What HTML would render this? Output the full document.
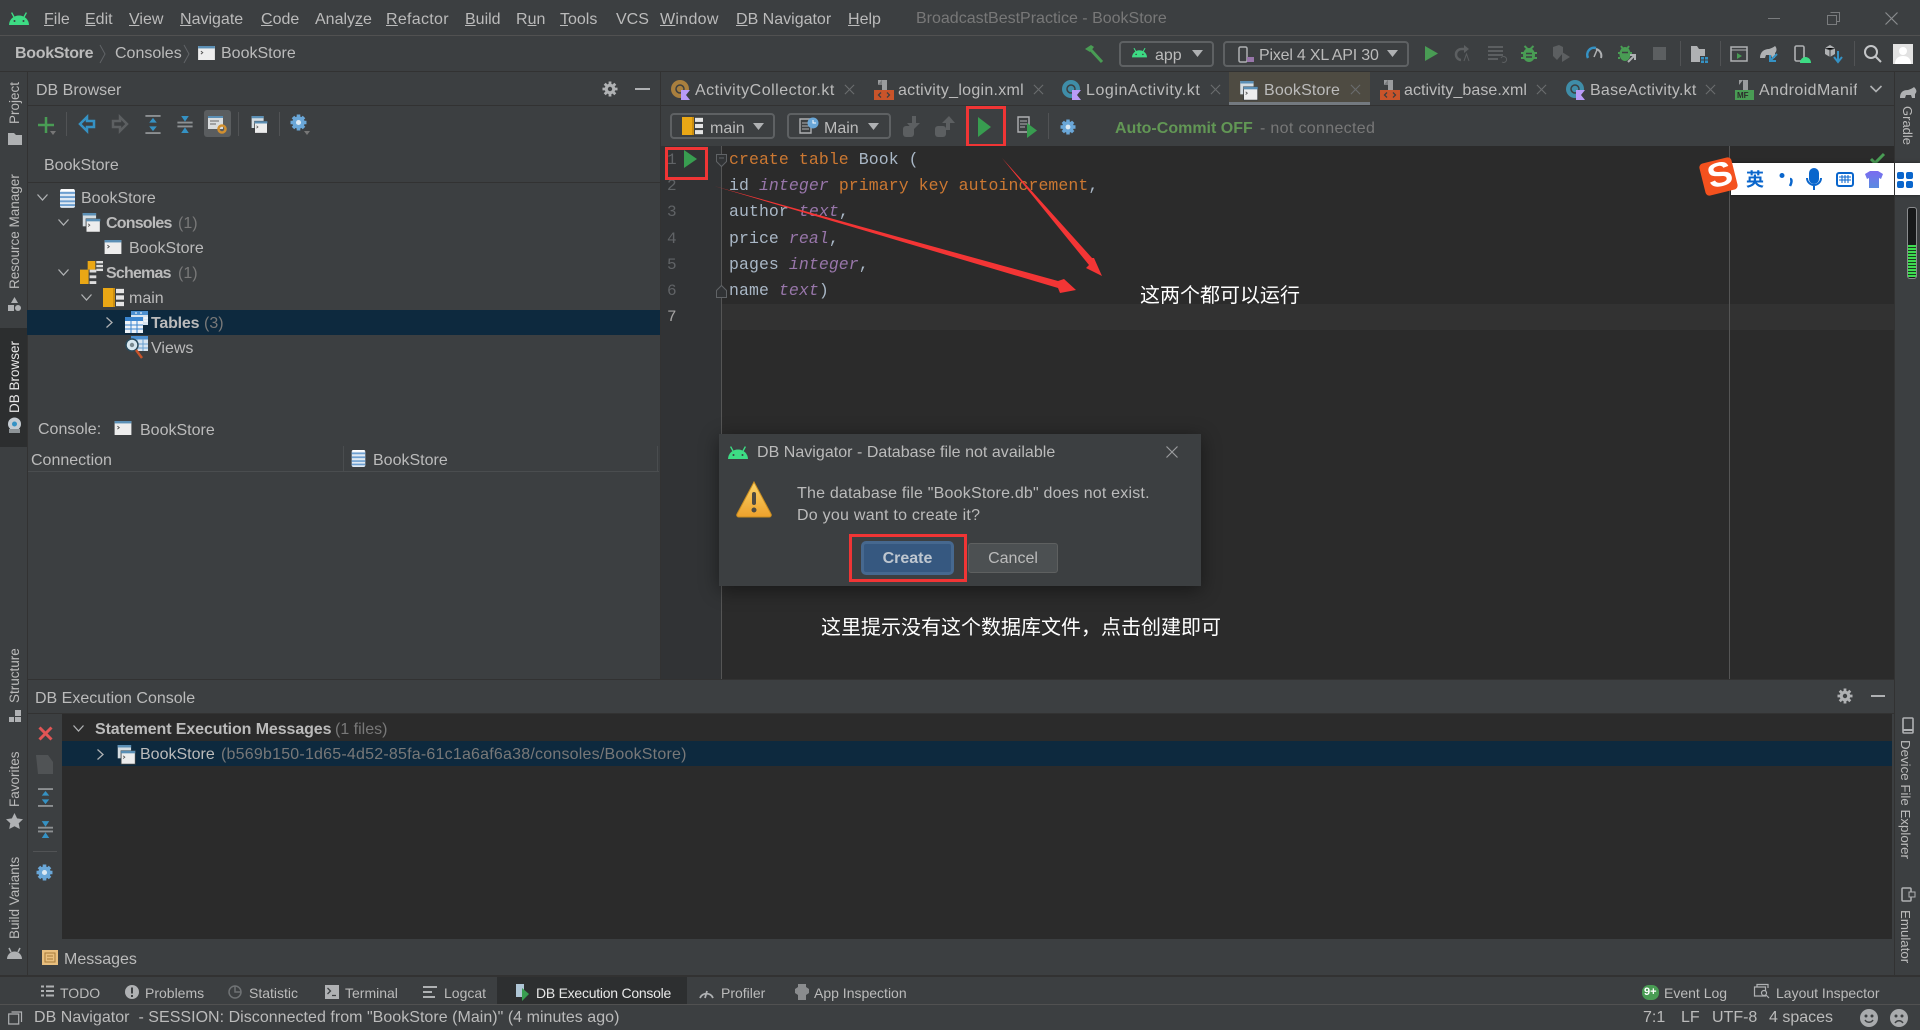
<!DOCTYPE html>
<html><head><meta charset="utf-8"><title>BookStore</title>
<style>
html,body{margin:0;padding:0;width:1920px;height:1030px;overflow:hidden;background:#3c3f41}
body{position:relative;font-family:"Liberation Sans","Noto Sans CJK SC",sans-serif;font-size:16px;color:#bbb}
.t{position:absolute;line-height:20px;white-space:pre;color:#bbb;margin-top:1px}
.b{font-weight:bold}.d{color:#787878}
.s{font-size:14px;margin-top:0}
.r{position:absolute}
.c{position:absolute;font-family:"Liberation Mono",monospace;font-size:16.5px;letter-spacing:.08px;line-height:26px;white-space:pre;color:#a9b7c6;left:729px}
.k{color:#cc7832}.p{color:#9876aa;font-style:italic}
.n{position:absolute;font-family:"Liberation Mono",monospace;font-size:16px;line-height:26px;color:#606366;left:667px}
.vl,.vr{position:absolute;width:22px;line-height:22px;writing-mode:vertical-rl;text-align:center;font-size:13.5px;color:#bbb;white-space:nowrap}
.vl{transform:rotate(180deg);left:4px}
.vr{left:1894px;font-size:13.300px}
svg{position:absolute;overflow:visible}
.box{position:absolute;border:2px solid #5e6163;border-radius:4px;box-sizing:border-box}
</style></head><body>
<svg width="0" height="0" style="position:absolute">
<defs>
<linearGradient id="wg" x1="0" y1="0" x2="0" y2="1"><stop offset="0" stop-color="#fbd468"/><stop offset="1" stop-color="#eda12c"/></linearGradient>
<linearGradient id="sg" x1="0" y1="0" x2="0" y2="1"><stop offset="0" stop-color="#7a6cf0"/><stop offset="1" stop-color="#5a8be0"/></linearGradient>
<symbol id="and" viewBox="0 0 20 13"><path d="M0 13a10 9.500 0 0 1 20 0z" fill="#3ddc84"/><path d="M5 5L2.600 .6M15 5l2.400-4.400" stroke="#3ddc84" stroke-width="1.400"/><circle cx="5.500" cy="9" r="1" fill="#3c3f41"/><circle cx="14.500" cy="9" r="1" fill="#3c3f41"/></symbol>
<symbol id="con" viewBox="0 0 18 15"><rect width="18" height="15" fill="#ededed"/><rect width="18" height="2.600" fill="#5b8fb5"/><path d="M3 5.500l2 1.600-2 1.600" stroke="#555" fill="none"/></symbol>
<symbol id="cons" viewBox="0 0 21 24"><rect x="0" y="0" width="16" height="16" fill="#d5dde2"/><rect width="16" height="3" fill="#5b8fb5"/><rect x="4" y="7" width="17" height="16" fill="#ededed" stroke="#3c3f41"/><rect x="4" y="7" width="17" height="3" fill="#5b8fb5"/><path d="M6.500 13l2 1.600-2 1.600" stroke="#555" fill="none"/></symbol>
<symbol id="db" viewBox="0 0 16 20"><rect width="16" height="20" rx="2" fill="#dfe9f3"/><path d="M0 4h16M0 8.500h16M0 13h16M0 17h16" stroke="#6d9fd0" stroke-width="2"/><path d="M1 1h14" stroke="#fff" stroke-width="2"/></symbol>
<symbol id="sch" viewBox="0 0 21 22" preserveAspectRatio="none"><rect x="0" y="0" width="10" height="22" fill="#eaa715"/><path d="M10 0h2v22h-2z" fill="#c98d10"/><rect x="13" y="1" width="8" height="5" fill="#e4e4e4"/><rect x="13" y="8.500" width="8" height="5" fill="#e4e4e4"/><rect x="13" y="16" width="8" height="5" fill="#e4e4e4"/></symbol>
<symbol id="schs" viewBox="0 0 24 24"><rect x="8" y="0" width="8" height="9" fill="#eaa715"/><rect x="17" y="0" width="7" height="2.500" fill="#ddd"/><rect x="17" y="4" width="7" height="2.500" fill="#ddd"/><rect x="17" y="8" width="7" height="2.500" fill="#ddd"/><rect x="0" y="9" width="9" height="15" fill="#eaa715"/><rect x="10" y="9" width="7" height="3" fill="#ddd"/><rect x="10" y="15" width="7" height="3" fill="#ddd"/><rect x="10" y="21" width="7" height="3" fill="#ddd"/></symbol>
<symbol id="tab" viewBox="0 0 23 22"><rect x="6" y="0" width="17" height="14" fill="#d7e4f0"/><rect x="6" y="0" width="17" height="4" fill="#4c90d0"/><rect y="6" width="18" height="16" fill="#eef3f8"/><rect y="6" width="18" height="4" fill="#3a85cf"/><path d="M0 14h18M0 18h18M6 10v12M12 10v12" stroke="#3a85cf"/><path d="M10 2h2M15 2h2M19 7h4M19 10h4" stroke="#fff"/></symbol>
<symbol id="gear" viewBox="0 0 16 16"><path d="M8 .5v15M.5 8h15M2.700 2.700l10.600 10.600M13.300 2.700L2.700 13.300" stroke="currentColor" stroke-width="2.800"/><circle cx="8" cy="8" r="5.300" fill="currentColor"/><circle cx="8" cy="8" r="2.200" fill="#3c3f41"/></symbol>
<symbol id="gearb" viewBox="0 0 16 16"><path d="M8 .5v15M.5 8h15M2.800 2.800l10.400 10.400M13.200 2.800L2.800 13.200" stroke="#6aa7d8" stroke-width="3.400"/><circle cx="8" cy="8" r="5.800" fill="#6aa7d8"/><circle cx="8" cy="8" r="2.400" fill="#dce9f3"/></symbol>
<symbol id="xp" viewBox="0 0 16 20"><path d="M0 1h16M0 19h16" stroke="#8d9092" stroke-width="2"/><path d="M8 3l4 5H4zM8 17l4-5H4z" fill="#3592c4"/></symbol>
<symbol id="cl" viewBox="0 0 16 20"><path d="M0 8h16M0 12h16" stroke="#8d9092" stroke-width="2"/><path d="M8 7l4-6H4zM8 13l4 6H4z" fill="#3592c4"/></symbol>
<symbol id="xml" viewBox="0 0 20 20"><path d="M4 0h9v10H4z" fill="#9a9c9e"/><path d="M8 0L4 5v5h4z" fill="#3c3f41"/><path d="M4 5l4-5v5z" fill="#7a7c7e"/><rect y="10" width="20" height="10" fill="#c9542a"/><path d="M7 12.500L4.500 15 7 17.500M13 12.500l2.500 2.500-2.500 2.500" stroke="#3c3f41" stroke-width="1.300" fill="none"/></symbol>
<symbol id="close" viewBox="0 0 12 12"><path d="M1 1l10 10M11 1L1 11" stroke="#6a6c6e" stroke-width="1.200"/></symbol>
</defs></svg>

<!-- Title bar -->
<div class="r" style="left:0;top:35px;width:1920px;height:1px;background:#515151"></div>
<svg style="left:9px;top:12px" width="20" height="13"><use href="#and"/></svg>
<span class="t" style="left:44px;top:9px"><u>F</u>ile</span>
<span class="t" style="left:85px;top:9px"><u>E</u>dit</span>
<span class="t" style="left:129px;top:9px"><u>V</u>iew</span>
<span class="t" style="left:180px;top:9px"><u>N</u>avigate</span>
<span class="t" style="left:261px;top:9px"><u>C</u>ode</span>
<span class="t" style="left:315px;top:9px">Analy<u>z</u>e</span>
<span class="t" style="left:386px;top:9px;letter-spacing:.3px"><u>R</u>efactor</span>
<span class="t" style="left:465px;top:9px"><u>B</u>uild</span>
<span class="t" style="left:516px;top:9px">R<u>u</u>n</span>
<span class="t" style="left:560px;top:9px"><u>T</u>ools</span>
<span class="t" style="left:616px;top:9px">VCS</span>
<span class="t" style="left:660px;top:9px;letter-spacing:.3px"><u>W</u>indow</span>
<span class="t" style="left:736px;top:9px"><u>D</u>B Navigator</span>
<span class="t" style="left:848px;top:9px"><u>H</u>elp</span>
<span class="t d" style="left:916px;top:8px">BroadcastBestPractice - BookStore</span>
<div class="r" style="left:1768px;top:18px;width:12px;height:1px;background:#7a7c7e"></div>
<svg style="left:1827px;top:12px" width="13" height="13" fill="none" stroke="#7a7c7e"><path d="M3.500.5h9v9h-3M.5 3.500h9v9h-9z"/></svg>
<svg style="left:1885px;top:12px" width="13" height="13"><path d="M.5.5l12 12M12.500.5l-12 12" stroke="#8a8c8e" stroke-width="1.200"/></svg>

<!-- Breadcrumb / run bar -->
<span class="t b" style="left:15px;top:43px;letter-spacing:-.3px">BookStore</span>
<svg style="left:100px;top:45px" width="6" height="18"><path d="M0 0l5 9-5 9" stroke="#606366" fill="none"/></svg>
<span class="t" style="left:115px;top:43px">Consoles</span>
<svg style="left:184px;top:45px" width="6" height="18"><path d="M0 0l5 9-5 9" stroke="#606366" fill="none"/></svg>
<svg style="left:198px;top:46px" width="17" height="14"><use href="#con"/></svg>
<span class="t" style="left:221px;top:43px">BookStore</span>
<div class="r" style="left:0;top:71px;width:1920px;height:1px;background:#323232"></div>

<svg style="left:1084px;top:44px" width="20" height="19"><path d="M1 5l6-4 3 2-4 5z" fill="#499c54"/><path d="M7 6l11 12" stroke="#499c54" stroke-width="3"/></svg>
<div class="box" style="left:1119px;top:41px;width:95px;height:26px"></div>
<svg style="left:1132px;top:47px" width="15" height="11"><use href="#and"/></svg>
<span class="t" style="left:1155px;top:45px">app</span>
<svg style="left:1192px;top:50px" width="11" height="7"><path d="M0 0h11L5.500 7z" fill="#afb1b3"/></svg>
<div class="box" style="left:1223px;top:41px;width:186px;height:26px"></div>
<svg style="left:1238px;top:46px" width="16" height="17"><rect x="1" y="1" width="8" height="15" rx="1.500" fill="none" stroke="#afb1b3" stroke-width="1.500"/><rect x="9" y="11" width="7" height="5" fill="#9876aa"/></svg>
<span class="t" style="left:1259px;top:45px;letter-spacing:-.2px">Pixel 4 XL API 30</span>
<svg style="left:1387px;top:50px" width="11" height="7"><path d="M0 0h11L5.500 7z" fill="#afb1b3"/></svg>

<svg style="left:1425px;top:46px" width="13" height="15"><path d="M0 0l13 7.500L0 15z" fill="#499c54"/></svg>
<svg style="left:1455px;top:45px" width="16" height="17"><path d="M11 4H7a5.500 5.500 0 0 0-1 11" stroke="#5c5f61" stroke-width="2.500" fill="none"/><path d="M9 0l5 4-5 4z" fill="#5c5f61"/><path d="M9 16l2.500-7 2.500 7" stroke="#5c5f61" fill="none"/></svg>
<svg style="left:1488px;top:46px" width="18" height="16"><path d="M0 1h15M0 5h15M0 9h15M0 13h10" stroke="#5c5f61" stroke-width="2"/><path d="M13 12a3 3 0 1 1 1 4" stroke="#5c5f61" fill="none"/></svg>
<svg style="left:1521px;top:45px" width="16" height="17"><ellipse cx="8" cy="10" rx="6" ry="7" fill="#499c54"/><path d="M3.500 1l3 3M12.500 1l-3 3M0 8h3M13 8h3M0 13h3M13 13h3" stroke="#499c54" stroke-width="2"/><path d="M5 8.500h6M5 12h6" stroke="#3c3f41" stroke-width="1.500"/></svg>
<svg style="left:1553px;top:45px" width="18" height="18"><path d="M0 2l6-2 4 2v6l-6 7-4-4z" fill="#5c5f61"/><path d="M9 7l8 5-8 5z" fill="#5c5f61"/></svg>
<svg style="left:1586px;top:45px" width="17" height="14"><path d="M2 13a7 7 0 0 1 8-10" stroke="#3592c4" stroke-width="2.500" fill="none"/><path d="M10 4a7 7 0 0 1 5 9" stroke="#afb1b3" stroke-width="2" fill="none"/><path d="M11 5L8 12" stroke="#afb1b3" stroke-width="1.500"/></svg>
<svg style="left:1618px;top:45px" width="18" height="18"><ellipse cx="7" cy="9" rx="5.500" ry="7" fill="#499c54"/><path d="M3 1l2 3M11 1L9 4M0 8h2M12 8h2M0 13h2" stroke="#499c54" stroke-width="2"/><path d="M4 7.500h6" stroke="#3c3f41" stroke-width="1.500"/><path d="M10 17l7-7M12 10h5v5" stroke="#afb1b3" stroke-width="2" fill="none"/></svg>
<div class="r" style="left:1653px;top:47px;width:13px;height:13px;background:#5c5f61"></div>
<div class="r" style="left:1680px;top:41px;width:1px;height:25px;background:#515355"></div>
<svg style="left:1691px;top:46px" width="18" height="17"><path d="M0 0h6l2 3h6v7H9v6H0z" fill="#afb1b3"/><path d="M10 11h3v2.500h-3zM14 11h3v2.500h-3zM10 14.500h3V17h-3zM14 14.500h3V17h-3z" fill="#3592c4"/></svg>
<div class="r" style="left:1720px;top:41px;width:1px;height:25px;background:#515355"></div>
<svg style="left:1730px;top:46px" width="18" height="16"><rect x="1" y="1" width="16" height="14" fill="none" stroke="#afb1b3" stroke-width="1.500"/><path d="M1 4h16" stroke="#afb1b3"/><path d="M7 7l5 3-5 3z" fill="#499c54"/></svg>
<svg style="left:1760px;top:45px" width="18" height="18"><path d="M0 13c0-6 4-9 9-9 3-1 5-2 6-3 2 2 2 5 0 7v5h-3l-1-3H6l-1 3H1z" fill="#afb1b3"/><path d="M17 9l-7 7M10 10v6h6" stroke="#3592c4" stroke-width="2" fill="none"/></svg>
<svg style="left:1794px;top:45px" width="17" height="18"><rect x="1" y="1" width="9" height="15" rx="1.500" fill="none" stroke="#afb1b3" stroke-width="1.600"/><path d="M6 18a5.500 6 0 0 1 11 0z" fill="#3ddc84"/></svg>
<svg style="left:1825px;top:45px" width="18" height="18"><path d="M0 3l5-3 5 3v6l-5 3-5-3z" fill="#afb1b3"/><path d="M5 5v7M0 3l5 2 5-2" stroke="#3c3f41"/><path d="M13 6v10M9 12l4 5 4-5" stroke="#3592c4" stroke-width="2" fill="none"/></svg>
<div class="r" style="left:1854px;top:41px;width:1px;height:25px;background:#515355"></div>
<svg style="left:1864px;top:45px" width="18" height="18" fill="none" stroke="#c4c6c8" stroke-width="2"><circle cx="7" cy="7" r="6"/><path d="M11.500 11.500L17 17"/></svg>
<svg style="left:1893px;top:44px" width="20" height="20"><rect width="20" height="20" fill="#e2e2e2"/><circle cx="10" cy="7" r="4" fill="#fff"/><path d="M2 20c0-6 4-8 8-8s8 2 8 8z" fill="#fff"/></svg>

<!-- Left stripe -->
<div class="r" style="left:27px;top:71px;width:1px;height:905px;background:#323232"></div>
<div class="r" style="left:0;top:328px;width:27px;height:119px;background:#2c2e2f"></div>
<div class="vl" style="top:82px;height:42px">Project</div>
<svg style="left:8px;top:133px" width="14" height="12"><path d="M0 0h6l2 2h6v10H0z" fill="#afb1b3"/></svg>
<div class="vl" style="top:175px;height:114px">Resource Manager</div>
<svg style="left:7px;top:297px" width="15" height="14"><path d="M7.500 0l3.500 6H4z" fill="#afb1b3"/><rect x="1" y="8" width="6" height="6" fill="#afb1b3"/><circle cx="11" cy="11" r="3" fill="#afb1b3"/></svg>
<div class="vl" style="top:340px;height:73px;color:#e8e8e8">DB Browser</div>
<svg style="left:6px;top:417px" width="17" height="17"><circle cx="8.500" cy="7" r="6.500" fill="#c5ccd2"/><circle cx="8.500" cy="7" r="2.500" fill="#3592c4"/><rect x="3" y="12" width="11" height="4" fill="#8d9396"/></svg>
<div class="vl" style="top:647px;height:58px">Structure</div>
<svg style="left:9px;top:710px" width="13" height="13"><rect x="6" y="0" width="6" height="6" fill="#afb1b3"/><rect x="0" y="7" width="5" height="5" fill="#afb1b3"/><rect x="6" y="7" width="6" height="5" fill="#afb1b3"/></svg>
<div class="vl" style="top:753px;height:54px">Favorites</div>
<svg style="left:6px;top:813px" width="17" height="16"><path d="M8.500 0l2.600 5.400 5.900.8-4.300 4.100 1.100 5.700-5.300-2.800L3.200 16l1.100-5.700L0 6.200l5.900-.8z" fill="#afb1b3"/></svg>
<div class="vl" style="top:857px;height:82px">Build Variants</div>
<svg style="left:7px;top:948px" width="15" height="11"><path d="M0 11a7.500 7.500 0 0 1 15 0z" fill="#afb1b3"/><path d="M4 4L2 0M11 4l2-4" stroke="#afb1b3" stroke-width="1.500"/></svg>

<!-- DB browser -->
<span class="t" style="left:36px;top:80px">DB Browser</span>
<svg style="left:602px;top:81px;color:#afb1b3" width="16" height="16"><use href="#gear"/></svg>
<div class="r" style="left:635px;top:88px;width:15px;height:2px;background:#afb1b3"></div>
<div class="r" style="left:28px;top:105px;width:632px;height:1px;background:#323232"></div>

<svg style="left:38px;top:117px" width="16" height="16"><path d="M8 0v16M0 8h16" stroke="#499c54" stroke-width="2.500"/></svg>
<svg style="left:50px;top:131px" width="6" height="4"><path d="M0 0h6L3 4z" fill="#777"/></svg>
<div class="r" style="left:66px;top:112px;width:1px;height:24px;background:#515355"></div>
<svg style="left:79px;top:116px" width="16" height="16"><path d="M8 1L1 8l7 7v-4h7V5H8z" fill="none" stroke="#3592c4" stroke-width="2.500"/></svg>
<svg style="left:112px;top:116px" width="16" height="16"><path d="M8 1l7 7-7 7v-4H1V5h7z" fill="none" stroke="#5c5f61" stroke-width="2.500"/></svg>
<svg style="left:145px;top:115px" width="16" height="19"><use href="#xp"/></svg>
<svg style="left:177px;top:115px" width="16" height="19"><use href="#cl"/></svg>
<div class="r" style="left:204px;top:110px;width:27px;height:27px;background:#5a5d5f;border-radius:3px"></div>
<svg style="left:208px;top:116px" width="19" height="18"><rect width="15" height="13" fill="#d9dcde"/><path d="M0 1h15" stroke="#5b8fb5" stroke-width="2"/><path d="M2 5h9M2 8h6" stroke="#666"/><circle cx="14" cy="13" r="3.500" fill="none" stroke="#d18f2f" stroke-width="2.500"/></svg>
<div class="r" style="left:238px;top:112px;width:1px;height:24px;background:#515355"></div>
<svg style="left:250px;top:116px" width="19" height="18"><use href="#cons"/></svg>
<div class="r" style="left:279px;top:112px;width:1px;height:24px;background:#515355"></div>
<svg style="left:290px;top:114px" width="17" height="17"><use href="#gearb"/></svg>
<svg style="left:304px;top:131px" width="6" height="4"><path d="M0 0h6L3 4z" fill="#777"/></svg>

<span class="t" style="left:44px;top:155px">BookStore</span>
<div class="r" style="left:28px;top:182px;width:632px;height:1px;background:#323232"></div>
<svg style="left:37px;top:194px" width="11" height="7"><path d="M.5.5L5.500 6l5-5.500" stroke="#afb1b3" stroke-width="1.300" fill="none"/></svg>
<svg style="left:60px;top:189px" width="15" height="19"><use href="#db"/></svg>
<span class="t" style="left:81px;top:188px">BookStore</span>
<svg style="left:58px;top:219px" width="11" height="7"><path d="M.5.5L5.500 6l5-5.500" stroke="#afb1b3" stroke-width="1.300" fill="none"/></svg>
<svg style="left:81px;top:213px" width="21" height="20"><use href="#cons"/></svg>
<span class="t b" style="left:106px;top:213px;letter-spacing:-.8px">Consoles</span><span class="t d" style="left:178px;top:213px">(1)</span>
<svg style="left:104px;top:240px" width="18" height="14"><use href="#con"/></svg>
<span class="t" style="left:129px;top:238px">BookStore</span>
<svg style="left:58px;top:269px" width="11" height="7"><path d="M.5.5L5.500 6l5-5.500" stroke="#afb1b3" stroke-width="1.300" fill="none"/></svg>
<svg style="left:80px;top:261px" width="23" height="23"><use href="#schs"/></svg>
<span class="t b" style="left:106px;top:263px;letter-spacing:-.8px">Schemas</span><span class="t d" style="left:178px;top:263px">(1)</span>
<svg style="left:81px;top:294px" width="11" height="7"><path d="M.5.5L5.500 6l5-5.500" stroke="#afb1b3" stroke-width="1.300" fill="none"/></svg>
<svg style="left:103px;top:288px" width="21" height="19"><use href="#sch"/></svg>
<span class="t" style="left:129px;top:288px">main</span>
<div class="r" style="left:27px;top:310px;width:633px;height:25px;background:#0d293e"></div>
<svg style="left:106px;top:317px" width="7" height="11"><path d="M.5.5L6 5.500l-5.500 5" stroke="#afb1b3" stroke-width="1.300" fill="none"/></svg>
<svg style="left:125px;top:311px" width="23" height="22"><use href="#tab"/></svg>
<span class="t b" style="left:151px;top:313px;letter-spacing:-.2px">Tables</span><span class="t d" style="left:204px;top:313px">(3)</span>
<svg style="left:125px;top:336px" width="23" height="23"><rect x="6" y="0" width="17" height="15" fill="#d7e4f0"/><rect x="6" y="0" width="17" height="3.500" fill="#4c90d0"/><path d="M6 8h17M6 12h17M12 3v12M18 3v12" stroke="#6aa0cf"/><circle cx="7" cy="9" r="6" fill="#d8e8f0" stroke="#2b4a5a" stroke-width="1.500"/><circle cx="7" cy="9" r="2.200" fill="#7a8a90"/><path d="M11 14l6 8" stroke="#c9542a" stroke-width="2.500"/></svg>
<span class="t" style="left:151px;top:338px">Views</span>

<span class="t" style="left:38px;top:419px">Console:</span>
<svg style="left:114px;top:421px" width="18" height="14"><use href="#con"/></svg>
<span class="t" style="left:140px;top:420px">BookStore</span>
<span class="t" style="left:31px;top:450px">Connection</span>
<div class="r" style="left:343px;top:446px;width:1px;height:25px;background:#4a4d4f"></div>
<div class="r" style="left:657px;top:446px;width:1px;height:25px;background:#4a4d4f"></div>
<div class="r" style="left:28px;top:471px;width:631px;height:1px;background:#4a4d4f"></div>
<svg style="left:351px;top:450px" width="15" height="17"><use href="#db"/></svg>
<span class="t" style="left:373px;top:450px">BookStore</span>

<!-- Tabs -->
<div class="r" style="left:660px;top:71px;width:1px;height:608px;background:#323232"></div>
<div class="r" style="left:1229px;top:72px;width:141px;height:33px;background:#4e4b42"></div>
<div class="r" style="left:1229px;top:102px;width:141px;height:3px;background:#747a80"></div>
<div class="r" style="left:661px;top:105px;width:1233px;height:1px;background:#323232"></div>

<svg style="left:671px;top:80px" width="19" height="20"><circle cx="9" cy="9" r="9" fill="#a97f3e"/><circle cx="9" cy="9" r="4" fill="none" stroke="#3c3f41" stroke-width="1.500"/><path d="M10 10h9v10h-9z" fill="#b99bf8"/><path d="M19 10l-4 5 4 5z" fill="#3c3f41"/></svg>
<span class="t" style="left:695px;top:80px;letter-spacing:.5px">ActivityCollector.kt</span>
<svg style="left:844px;top:84px" width="11" height="11"><use href="#close"/></svg>
<svg style="left:874px;top:80px" width="20" height="20"><use href="#xml"/></svg>
<span class="t" style="left:898px;top:80px;letter-spacing:.28px">activity_login.xml</span>
<svg style="left:1033px;top:84px" width="11" height="11"><use href="#close"/></svg>
<svg style="left:1062px;top:80px" width="19" height="20"><circle cx="9" cy="9" r="9" fill="#3f8da8"/><circle cx="9" cy="9" r="4" fill="none" stroke="#3c3f41" stroke-width="1.500"/><path d="M10 10h9v10h-9z" fill="#b99bf8"/><path d="M19 10l-4 5 4 5z" fill="#3c3f41"/></svg>
<span class="t" style="left:1086px;top:80px;letter-spacing:.55px">LoginActivity.kt</span>
<svg style="left:1210px;top:84px" width="11" height="11"><use href="#close"/></svg>
<svg style="left:1239px;top:81px" width="20" height="20"><use href="#cons"/></svg>
<span class="t" style="left:1264px;top:80px;letter-spacing:.15px">BookStore</span>
<svg style="left:1350px;top:84px" width="11" height="11"><use href="#close"/></svg>
<svg style="left:1380px;top:80px" width="20" height="20"><use href="#xml"/></svg>
<span class="t" style="left:1404px;top:80px;letter-spacing:.07px">activity_base.xml</span>
<svg style="left:1536px;top:84px" width="11" height="11"><use href="#close"/></svg>
<svg style="left:1566px;top:80px" width="19" height="20"><circle cx="9" cy="9" r="9" fill="#3f8da8"/><circle cx="9" cy="9" r="4" fill="none" stroke="#3c3f41" stroke-width="1.500"/><path d="M10 10h9v10h-9z" fill="#b99bf8"/><path d="M19 10l-4 5 4 5z" fill="#3c3f41"/></svg>
<span class="t" style="left:1590px;top:80px;letter-spacing:.25px">BaseActivity.kt</span>
<svg style="left:1705px;top:84px" width="11" height="11"><use href="#close"/></svg>
<svg style="left:1735px;top:80px" width="19" height="20"><path d="M4 0h9v10H4z" fill="#9a9c9e"/><path d="M8 0L4 5v5h4z" fill="#3c3f41"/><rect y="10" width="19" height="10" fill="#499c54"/></svg>
<span class="r" style="left:1737px;top:91px;font-size:8px;line-height:9px;color:#2b2b2b;font-weight:bold">MF</span>
<div class="t" style="left:1759px;top:80px;width:98px;overflow:hidden;letter-spacing:.4px">AndroidManifest.xml</div>
<svg style="left:1870px;top:85px" width="12" height="8"><path d="M.5 1L6 6.500 11.500 1" stroke="#afb1b3" stroke-width="1.600" fill="none"/></svg>

<!-- Editor toolbar -->
<div class="box" style="left:670px;top:113px;width:105px;height:26px"></div>
<svg style="left:682px;top:117px" width="21" height="18"><use href="#sch"/></svg>
<span class="t" style="left:710px;top:118px">main</span>
<svg style="left:753px;top:123px" width="11" height="7"><path d="M0 0h11L5.500 7z" fill="#afb1b3"/></svg>
<div class="box" style="left:787px;top:113px;width:104px;height:26px"></div>
<svg style="left:799px;top:117px" width="20" height="17"><path d="M1 2h11v14H1z" fill="none" stroke="#afb1b3" stroke-width="1.400"/><path d="M3 6h7M3 9h7M3 12h7" stroke="#afb1b3"/><circle cx="14" cy="6" r="5.500" fill="#6aa7d8"/><path d="M14 3v3h3" stroke="#fff" fill="none"/></svg>
<span class="t" style="left:824px;top:118px">Main</span>
<svg style="left:868px;top:123px" width="11" height="7"><path d="M0 0h11L5.500 7z" fill="#afb1b3"/></svg>
<svg style="left:903px;top:116px" width="20" height="21"><rect x="0" y="10" width="11" height="11" rx="3" fill="#5c5f61"/><path d="M13 0v7h4l-7 7-6-7h5V0z" fill="#5c5f61"/></svg>
<svg style="left:935px;top:116px" width="20" height="21"><rect x="0" y="10" width="11" height="11" rx="3" fill="#5c5f61"/><path d="M11 14V7H7l7-7 6 7h-5v7z" fill="#5c5f61"/></svg>
<svg style="left:978px;top:117px" width="13" height="20"><path d="M0 0l13 10L0 20z" fill="#389d50"/></svg>
<div class="r" style="left:966px;top:106px;width:40px;height:41px;box-sizing:border-box;border:3px solid #f03535"></div>
<svg style="left:1017px;top:116px" width="20" height="22"><path d="M1 1h11v15H1z" fill="none" stroke="#afb1b3" stroke-width="1.400"/><path d="M3 5h7M3 8h7M3 11h5" stroke="#afb1b3"/><path d="M10 7l10 7.500L10 22z" fill="#389d50"/></svg>
<div class="r" style="left:1048px;top:113px;width:1px;height:26px;background:#515355"></div>
<svg style="left:1060px;top:119px" width="16" height="16"><use href="#gearb"/></svg>
<span class="t b" style="left:1115px;top:118px;color:#629755">Auto-Commit OFF</span>
<span class="t d" style="left:1260px;top:118px;letter-spacing:.33px">- not connected</span>

<!-- Editor -->
<div class="r" style="left:661px;top:146px;width:1233px;height:533px;background:#2b2b2b"></div>
<div class="r" style="left:661px;top:146px;width:61px;height:533px;background:#313335"></div>
<div class="r" style="left:721px;top:146px;width:1px;height:533px;background:#555"></div>
<div class="r" style="left:722px;top:304px;width:1172px;height:26px;background:#323232"></div>
<div class="r" style="left:1729px;top:146px;width:1px;height:533px;background:#555"></div>
<span class="n" style="top:147px">1</span><span class="n" style="top:173px">2</span><span class="n" style="top:199px">3</span><span class="n" style="top:226px">4</span><span class="n" style="top:252px">5</span><span class="n" style="top:278px">6</span><span class="n" style="top:304px;color:#a4a3a3">7</span>
<svg style="left:716px;top:154px" width="11" height="13"><path d="M.5.500h10v7l-5 5-5-5z" fill="#313335" stroke="#606366"/><path d="M3 4h5" stroke="#606366"/></svg>
<svg style="left:716px;top:285px" width="11" height="13"><path d="M.5 12.500h10v-7l-5-5-5 5z" fill="#313335" stroke="#606366"/></svg>
<svg style="left:684px;top:150px" width="13" height="18"><path d="M0 0l13 9L0 18z" fill="#389d50"/></svg>
<div class="r" style="left:665px;top:147px;width:43px;height:33px;box-sizing:border-box;border:3px solid #f03535"></div>

<div class="c" style="top:147px"><span class="k">create table </span>Book (</div>
<div class="c" style="top:173px">id <span class="p">integer</span> <span class="k">primary key autoincrement</span>,</div>
<div class="c" style="top:199px">author <span class="p">text</span>,</div>
<div class="c" style="top:226px">price <span class="p">real</span>,</div>
<div class="c" style="top:252px">pages <span class="p">integer</span>,</div>
<div class="c" style="top:278px">name <span class="p">text</span>)</div>

<svg style="left:0;top:0" width="1920" height="1030">
<path d="M714 186L1058 281L1064 279L1076 290L1060 293L1058 288z" fill="#f33535"/>
<path d="M1002 158L1092 258L1094 258L1102 276L1086 268L1089 265z" fill="#f33535"/>
</svg>
<span class="t" style="left:1140px;top:285px;color:#fff;font-size:20px;line-height:20px">这两个都可以运行</span>

<!-- Sogou bar -->
<svg style="left:1870px;top:153px" width="16" height="12"><path d="M1 6l4 4 9-9" stroke="#499c54" stroke-width="3" fill="none"/></svg>
<div class="r" style="left:1731px;top:163px;width:189px;height:32px;background:#fff;box-shadow:0 0 3px rgba(0,0,0,.5)"></div>
<div class="r" style="left:1702px;top:160px;width:33px;height:33px;background:#f4511e;border-radius:4px;transform:rotate(-14deg)"></div>
<span class="r" style="left:1705px;top:155px;width:30px;text-align:center;font-size:34px;line-height:40px;color:#fff;font-weight:bold;transform:rotate(-14deg) scaleX(1.1)">S</span>
<span class="r" style="left:1746px;top:168px;font-size:18px;line-height:22px;color:#0a66cc;font-weight:bold;font-family:'Noto Sans CJK SC',sans-serif">英</span>
<svg style="left:1779px;top:172px" width="14" height="16"><circle cx="3" cy="3.500" r="2.500" fill="#0a66cc"/><path d="M11 7c2 0 2 3 0 7" stroke="#0a66cc" stroke-width="2.500" fill="none"/></svg>
<svg style="left:1806px;top:169px" width="16" height="22" fill="none" stroke="#0a66cc" stroke-width="2"><rect x="4" y="0" width="8" height="14" rx="4" fill="#0a66cc"/><path d="M1 9a7 7 0 0 0 14 0M8 16v5"/></svg>
<svg style="left:1836px;top:172px" width="18" height="15"><rect x="1" y="1" width="16" height="13" rx="2" fill="none" stroke="#0a66cc" stroke-width="2"/><path d="M3 5h12M3 8h12M6 3v8M9 3v8M12 3v8" stroke="#0a66cc"/></svg>
<svg style="left:1865px;top:171px" width="18" height="17"><path d="M5 0h8l5 3-2 5-2-1v10H4V7L2 8 0 3z" fill="url(#sg)"/></svg>
<svg style="left:1897px;top:172px" width="16" height="16"><rect width="7" height="7" rx="2" fill="#0a66cc"/><rect x="9" width="7" height="7" rx="2" fill="#0a66cc"/><rect y="9" width="7" height="7" rx="2" fill="#0a66cc"/><rect x="9" y="9" width="7" height="7" rx="2" fill="#0a66cc"/></svg>

<!-- Right stripe -->
<div class="r" style="left:1894px;top:71px;width:1px;height:905px;background:#323232"></div>
<svg style="left:1900px;top:86px" width="17" height="13"><path d="M0 12c0-6 3-8 8-8 3-1 5-2 6-3 3 3 3 5 1 7v4h-3l-1-3H6l-1 3z" fill="#afb1b3"/></svg>
<div class="vr" style="top:106px;height:38px;left:1896px;font-size:13px">Gradle</div>
<div class="r" style="left:1907px;top:207px;width:10px;height:72px;background:#17191a;border:1px solid #8a8c8e;border-radius:3px;box-sizing:border-box"></div>
<div class="r" style="left:1908px;top:245px;width:8px;height:32px;background:repeating-linear-gradient(#3ddc4f 0 2px,#1a3a20 2px 3px)"></div>
<svg style="left:1902px;top:717px" width="12" height="17"><rect x="1" y="1" width="10" height="15" rx="1" fill="none" stroke="#afb1b3" stroke-width="1.600"/><path d="M1 13h10" stroke="#afb1b3" stroke-width="2"/></svg>
<div class="vr" style="top:740px;height:118px">Device File Explorer</div>
<svg style="left:1901px;top:887px" width="15" height="15"><rect x="1" y="1" width="9" height="13" rx="1" fill="none" stroke="#afb1b3" stroke-width="1.500"/><rect x="8" y="5" width="6" height="5" fill="#3c3f41" stroke="#afb1b3"/></svg>
<div class="vr" style="top:910px;height:54px">Emulator</div>

<!-- Dialog -->
<div class="r" style="left:719px;top:434px;width:482px;height:152px;background:#3c3f41;box-shadow:0 4px 18px rgba(0,0,0,.45)"></div>
<svg style="left:728px;top:446px" width="20" height="13"><use href="#and"/></svg>
<span class="t" style="left:757px;top:442px;font-size:16px;letter-spacing:.03px">DB Navigator - Database file not available</span>
<svg style="left:1166px;top:446px" width="12" height="12"><path d="M.5.500l11 11M11.500.500l-11 11" stroke="#9a9c9e" stroke-width="1.200"/></svg>
<svg style="left:736px;top:481px" width="36" height="36"><path d="M18 1L35 33a2 2 0 0 1-2 3H3a2 2 0 0 1-2-3z" fill="url(#wg)" stroke="#c98d20"/><rect x="16" y="11" width="4" height="13" rx="2" fill="#4e4b42"/><circle cx="18" cy="29" r="2.500" fill="#4e4b42"/></svg>
<span class="t" style="left:797px;top:483px;letter-spacing:.2px">The database file "BookStore.db" does not exist.</span>
<span class="t" style="left:797px;top:505px;letter-spacing:.25px">Do you want to create it?</span>
<div class="r" style="left:861px;top:541px;width:93px;height:34px;box-sizing:border-box;background:#365880;border:3px solid #46688f;border-radius:5px;text-align:center;line-height:30px;font-weight:bold;color:#bfc7d0">Create</div>
<div class="r" style="left:968px;top:543px;width:90px;height:30px;box-sizing:border-box;background:#4c5052;border:1px solid #5e6060;border-radius:3px;text-align:center;line-height:30px;color:#bbb">Cancel</div>
<div class="r" style="left:849px;top:534px;width:118px;height:48px;box-sizing:border-box;border:3px solid #f03535"></div>
<span class="t" style="left:821px;top:617px;color:#fff;font-size:20px;line-height:20px">这里提示没有这个数据库文件，点击创建即可</span>

<!-- Bottom panel -->
<div class="r" style="left:28px;top:679px;width:1866px;height:1px;background:#323232"></div>
<span class="t" style="left:35px;top:688px">DB Execution Console</span>
<svg style="left:1837px;top:688px;color:#afb1b3" width="16" height="16"><use href="#gear"/></svg>
<div class="r" style="left:1871px;top:695px;width:14px;height:2px;background:#afb1b3"></div>
<div class="r" style="left:62px;top:713px;width:1830px;height:226px;background:#2b2b2b"></div>
<div class="r" style="left:28px;top:713px;width:1866px;height:1px;background:#323232"></div>
<svg style="left:38px;top:726px" width="15" height="15"><path d="M1.500 1.500l12 12M13.500 1.500l-12 12" stroke="#e05555" stroke-width="3"/></svg>
<svg style="left:36px;top:755px" width="19" height="20"><path d="M0 0h12l5 7v12H2z" fill="#505355"/></svg>
<svg style="left:38px;top:788px" width="15" height="19"><use href="#xp"/></svg>
<svg style="left:38px;top:820px" width="15" height="19"><use href="#cl"/></svg>
<div class="r" style="left:33px;top:851px;width:24px;height:1px;background:#515355"></div>
<svg style="left:36px;top:864px" width="17" height="17"><use href="#gearb"/></svg>

<svg style="left:73px;top:725px" width="11" height="7"><path d="M.5.5L5.500 6l5-5.500" stroke="#afb1b3" stroke-width="1.300" fill="none"/></svg>
<span class="t b" style="left:95px;top:719px;letter-spacing:-.1px">Statement Execution Messages</span>
<span class="t d" style="left:335px;top:719px">(1 files)</span>
<div class="r" style="left:62px;top:741px;width:1830px;height:25px;background:#0d293e"></div>
<svg style="left:97px;top:749px" width="7" height="11"><path d="M.5.5L6 5.500l-5.500 5" stroke="#afb1b3" stroke-width="1.300" fill="none"/></svg>
<svg style="left:117px;top:745px" width="19" height="20"><use href="#cons"/></svg>
<span class="t" style="left:140px;top:744px">BookStore</span>
<span class="t d" style="left:221px;top:744px;letter-spacing:.21px">(b569b150-1d65-4d52-85fa-61c1a6af6a38/consoles/BookStore)</span>

<svg style="left:42px;top:950px" width="16" height="15"><rect width="16" height="15" fill="#e9bf7e"/><rect x="3" y="3" width="10" height="9" fill="none" stroke="#a87b3a"/><path d="M5 6h6M5 9h6" stroke="#a87b3a"/></svg>
<span class="t" style="left:64px;top:949px">Messages</span>
<div class="r" style="left:0;top:975px;width:1920px;height:2px;background:#323232"></div>

<!-- tool tabs -->
<div class="r" style="left:497px;top:977px;width:190px;height:27px;background:#2d2f30"></div>
<svg style="left:41px;top:985px" width="13" height="13"><path d="M0 1.500h3M5 1.500h8M0 6h3M5 6h8M0 10.500h3M5 10.500h8" stroke="#afb1b3" stroke-width="2"/></svg>
<span class="t s" style="left:60px;top:983px">TODO</span>
<svg style="left:125px;top:985px" width="14" height="14"><circle cx="7" cy="7" r="7" fill="#afb1b3"/><rect x="6" y="2.500" width="2" height="6" fill="#3c3f41"/><rect x="6" y="10" width="2" height="2" fill="#3c3f41"/></svg>
<span class="t s" style="left:145px;top:983px">Problems</span>
<svg style="left:228px;top:985px" width="14" height="14" fill="none" stroke="#6f7274" stroke-width="1.500"><circle cx="7" cy="7" r="6"/><path d="M7 1v6h6"/></svg>
<span class="t s" style="left:249px;top:983px">Statistic</span>
<svg style="left:325px;top:985px" width="14" height="14"><rect width="14" height="14" fill="#afb1b3"/><path d="M2.500 3l3 3-3 3M7 10.500h4" stroke="#3c3f41" stroke-width="1.300" fill="none"/></svg>
<span class="t s" style="left:345px;top:983px">Terminal</span>
<svg style="left:423px;top:986px" width="14" height="12"><path d="M0 1h14M0 6h9M0 11h12" stroke="#afb1b3" stroke-width="2"/></svg>
<span class="t s" style="left:444px;top:983px">Logcat</span>
<svg style="left:516px;top:984px" width="13" height="17"><rect width="8" height="13" fill="#afc6d6"/><path d="M6 4l7 6-7 7z" fill="#389d50"/></svg>
<span class="t s" style="left:536px;top:983px;color:#e8e8e8;letter-spacing:-.25px">DB Execution Console</span>
<svg style="left:699px;top:986px" width="15" height="13" fill="none" stroke="#afb1b3" stroke-width="1.800"><path d="M1 12a7 7 0 0 1 13 0M8 5l-2 7"/></svg>
<span class="t s" style="left:721px;top:983px">Profiler</span>
<svg style="left:795px;top:984px" width="14" height="16"><path d="M3 0h8v3l3 2v4l-3 2v5H3v-5L0 9V5l3-2z" fill="#8a8c8e"/></svg>
<span class="t s" style="left:814px;top:983px">App Inspection</span>
<svg style="left:1642px;top:985px" width="17" height="15"><rect width="17" height="15" rx="7" fill="#499c54"/></svg>
<span class="r b" style="left:1644px;top:985px;font-size:11px;line-height:14px;color:#fff;font-weight:bold">9+</span>
<span class="t s" style="left:1664px;top:983px">Event Log</span>
<svg style="left:1754px;top:984px" width="16" height="15" fill="none" stroke="#afb1b3" stroke-width="1.200"><path d="M3 3V.5h11V4M.5 3h11v9H.5z"/><circle cx="10" cy="9" r="2.500" fill="#3c3f41"/><path d="M12 11l3 3"/></svg>
<span class="t s" style="left:1776px;top:983px">Layout Inspector</span>

<!-- status -->
<div class="r" style="left:0;top:1004px;width:1920px;height:1px;background:#515151"></div>
<svg style="left:8px;top:1011px" width="15" height="14" fill="none" stroke="#afb1b3" stroke-width="1.200"><path d="M3.500 1h10v10M.7 3h10v10H.7z"/></svg>
<span class="t" style="left:34px;top:1007px;letter-spacing:.03px">DB Navigator  - SESSION: Disconnected from "BookStore (Main)" (4 minutes ago)</span>
<span class="t" style="left:1643px;top:1007px">7:1</span>
<span class="t" style="left:1681px;top:1007px">LF</span>
<span class="t" style="left:1712px;top:1007px">UTF-8</span>
<span class="t" style="left:1769px;top:1007px">4 spaces</span>
<svg style="left:1860px;top:1009px" width="18" height="18"><circle cx="9" cy="9" r="9" fill="#a9abad"/><circle cx="6" cy="7" r="1.500" fill="#3c3f41"/><circle cx="12" cy="7" r="1.500" fill="#3c3f41"/><path d="M5 11c2 3 6 3 8 0" stroke="#3c3f41" stroke-width="1.500" fill="none"/></svg>
<svg style="left:1890px;top:1009px" width="18" height="18"><circle cx="9" cy="9" r="9" fill="#a9abad"/><circle cx="6" cy="7" r="1.500" fill="#3c3f41"/><circle cx="12" cy="7" r="1.500" fill="#3c3f41"/><path d="M5 14c2-3 6-3 8 0" stroke="#3c3f41" stroke-width="1.500" fill="none"/></svg>
</body></html>
